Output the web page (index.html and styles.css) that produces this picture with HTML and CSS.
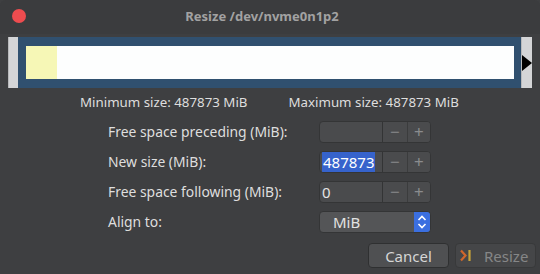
FILE: index.html
```html
<!DOCTYPE html>
<html lang="en">
<head>
  <meta charset="UTF-8">
  <title>Resize /dev/nvme0n1p2</title>
  <link rel="stylesheet" href="styles.css">
</head>
<body>
  <div class="window">
    <div class="titlebar">
      <span class="close"></span>
      <span class="title">Resize /dev/nvme0n1p2</span>
    </div>

    <!-- partition bar -->
    <div class="bar-row">
      <div class="handle"></div>
      <div class="frame">
        <div class="part">
          <div class="used"></div>
        </div>
      </div>
      <div class="handle right">
        <span class="arrow"></span>
      </div>
    </div>

    <div class="limits">
      <span>Minimum size: 487873 MiB</span>
      <span>Maximum size: 487873 MiB</span>
    </div>

    <div class="form">
      <label>Free space preceding (MiB):</label>
      <div class="spin">
        <div class="entry"></div>
        <button class="step">&minus;</button>
        <button class="step">+</button>
      </div>

      <label>New size (MiB):</label>
      <div class="spin">
        <div class="entry"><span class="sel">487873</span></div>
        <button class="step">&minus;</button>
        <button class="step">+</button>
      </div>

      <label>Free space following (MiB):</label>
      <div class="spin">
        <div class="entry">0</div>
        <button class="step">&minus;</button>
        <button class="step">+</button>
      </div>

      <label>Align to:</label>
      <div class="combo">
        <span class="combo-text">MiB</span>
        <span class="combo-btn">
          <svg width="10" height="16" viewBox="0 0 10 16">
            <path d="M1.5 6 L5 2.5 L8.5 6 M1.5 10 L5 13.5 L8.5 10" fill="none" stroke="#fff" stroke-width="1.6"/>
          </svg>
        </span>
      </div>
    </div>

    <div class="actions">
      <button class="btn">Cancel</button>
      <button class="btn disabled">
        <svg width="12" height="13" viewBox="0 0 12 13">
          <path d="M1 1.5 L5.5 6.5 L1 11.5" fill="none" stroke="#d0662c" stroke-width="2.2"/>
          <path d="M9.5 1 V12" stroke="#c9a23a" stroke-width="2.2"/>
        </svg>
        Resize
      </button>
    </div>
  </div>
</body>
</html>
```
FILE: styles.css
```css
body {
  margin: 0;
  background: #3e3f41;
  font-family: "Noto Sans", "Open Sans", sans-serif;
  font-size: 13px;
  color: #dedede;
}
.window {
  width: 540px;
  height: 274px;
  background: #3e3f41;
  border-radius: 6px 6px 0 0;
  overflow: hidden;
}
.titlebar {
  height: 34px;
  display: flex;
  align-items: center;
  justify-content: center;
  position: relative;
  background: #3b3c3e;
}
.close {
  position: absolute;
  left: 12px;
  top: 9px;
  width: 14px;
  height: 14px;
  border-radius: 50%;
  background: #ee4c4f;
}
.title {
  font-weight: bold;
  color: #a2a2a2;
  margin: -2px 16px 0 0;
}
.bar-row {
  display: flex;
  height: 51px;
  margin-top: 3px;
  padding-left: 8px;
}
.handle {
  width: 10px;
  background: #d4d5d7;
  border-left: 1px solid #b8b9bb;
  box-sizing: border-box;
}
.handle.right {
  width: 11px;
  position: relative;
}
.arrow {
  position: absolute;
  left: 0;
  top: 18px;
  border-top: 8px solid transparent;
  border-bottom: 8px solid transparent;
  border-left: 10px solid #000;
}
.frame {
  width: 503px;
  background: #30506f;
  padding: 9px 7px 9px 8px;
  box-sizing: border-box;
}
.part {
  height: 33px;
  background: #fdfefe;
  display: flex;
}
.used {
  width: 31px;
  background: #f6f7b6;
}
.limits {
  display: flex;
  gap: 41px;
  padding-left: 80px;
  margin-top: 4px;
  height: 20px;
  line-height: 20px;
  font-size: 13.3px;
}
.form {
  display: grid;
  grid-template-columns: 211px 112px;
  row-gap: 8px;
  padding-left: 108px;
  margin-top: 9px;
  align-items: center;
}
.form label {
  line-height: 22px;
  font-size: 13.9px;
}
.spin {
  display: flex;
  height: 22px;
  border: 1px solid #343536;
  border-radius: 4px;
  background: #4a4b4d;
  box-sizing: border-box;
  overflow: hidden;
}
.entry {
  width: 62px;
  padding-left: 2px;
  line-height: 20px;
  color: #e4e4e4;
  font-size: 15px;
  border-right: 1px solid #333435;
}
.sel {
  background: #3663cc;
  color: #fff;
  padding: 0 1px;
}
.step {
  width: 24px;
  border: none;
  background: #4a4b4d;
  color: #8b8c8e;
  font-family: inherit;
  font-size: 17px;
  padding: 0;
  line-height: 20px;
}
.step + .step {
  border-left: 1px solid #3b3c3d;
}
.combo {
  display: flex;
  height: 22px;
  border: 1px solid #343536;
  border-radius: 4px;
  background: #545557;
  box-sizing: border-box;
  overflow: hidden;
}
.combo-text {
  flex: 1;
  padding-left: 13px;
  line-height: 20px;
  font-size: 15px;
  color: #e2e2e2;
}
.combo-btn {
  width: 16px;
  background: #3b6fe0;
  display: flex;
  align-items: center;
  justify-content: center;
}
.actions {
  display: flex;
  justify-content: flex-end;
  gap: 6px;
  padding-right: 4px;
  margin-top: 10px;
}
.btn {
  width: 81px;
  height: 25px;
  border: 1px solid #2f3031;
  border-radius: 4px;
  background: #4f5052;
  color: #d6d6d6;
  font-family: inherit;
  font-size: 15px;
  display: flex;
  align-items: center;
  justify-content: center;
  gap: 12px;
  padding: 0;
}
.btn.disabled {
  background: #454648;
  color: #858687;
  border-color: #38393a;
  justify-content: flex-start;
  padding-left: 4px;
}
```
